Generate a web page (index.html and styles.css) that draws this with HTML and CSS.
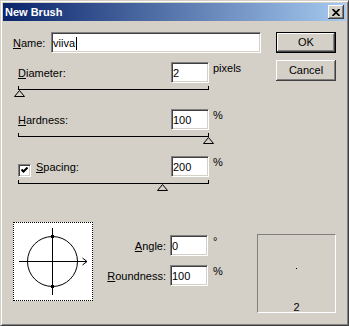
FILE: index.html
```html
<!DOCTYPE html>
<html lang="en">
  <head>
    <meta charset="UTF-8" />
    <meta name="viewport" content="width=device-width, initial-scale=1.0" />
    <title>New Brush</title>
    <link rel="stylesheet" href="styles.css">
  </head>
  <body>
    <div class="window">
      <div class="titlebar">
        <span class="title">New Brush</span>
        <span class="close">
          <svg width="8" height="7" viewBox="0 0 8 7">
            <path d="M0.5 0 L7.5 7 M7.5 0 L0.5 7" stroke="#000" stroke-width="1.7" fill="none" />
          </svg>
        </span>
      </div>

      <div class="dialog">
        <div class="top">
          <div class="fields">
            <div class="name-row">
              <span class="name-label"><u>N</u>ame:</span>
              <span class="field name-field">viiva<span class="caret"></span></span>
            </div>

            <div class="setting">
              <div class="setting-row">
                <span class="setting-label"><u>D</u>iameter:</span>
                <span class="field">2</span>
                <span class="unit">pixels</span>
              </div>
              <div class="slider">
                <span class="thumb" style="left: calc(0% - 5px)">
                  <svg width="11" height="7"><polygon points="5.5,0.5 0.5,6.5 10.5,6.5" fill="none" stroke="#000" /></svg>
                </span>
              </div>
            </div>

            <div class="setting">
              <div class="setting-row">
                <span class="setting-label"><u>H</u>ardness:</span>
                <span class="field">100</span>
                <span class="unit">%</span>
              </div>
              <div class="slider">
                <span class="thumb" style="left: calc(100% - 5px)">
                  <svg width="11" height="7"><polygon points="5.5,0.5 0.5,6.5 10.5,6.5" fill="none" stroke="#000" /></svg>
                </span>
              </div>
            </div>

            <div class="setting">
              <div class="setting-row">
                <span class="setting-label">
                  <span class="checkbox">
                    <svg width="7" height="7"><path d="M0.5 2.5 L2.5 4.5 L6.5 0.5" stroke="#000" stroke-width="2" fill="none" /></svg>
                  </span><u>S</u>pacing:
                </span>
                <span class="field">200</span>
                <span class="unit">%</span>
              </div>
              <div class="slider">
                <span class="thumb" style="left: calc(75.7% - 5px)">
                  <svg width="11" height="7"><polygon points="5.5,0.5 0.5,6.5 10.5,6.5" fill="none" stroke="#000" /></svg>
                </span>
              </div>
            </div>
          </div>

          <div class="buttons">
            <button class="btn btn-default">OK</button>
            <button class="btn">Cancel</button>
          </div>
        </div>

        <div class="bottom">
          <div class="preview">
            <svg width="78" height="77" viewBox="0 0 78 77">
              <circle cx="38.5" cy="38.5" r="25" fill="none" stroke="#000" />
              <path d="M5 38.5 H73 M38.5 5 V72" stroke="#000" fill="none" />
              <path d="M68.5 35 L73 38.5 L68.5 42" stroke="#000" fill="none" />
              <rect x="37" y="12" width="3" height="3" />
              <rect x="37" y="62" width="3" height="3" />
            </svg>
          </div>

          <div class="angles">
            <span class="angle-label"><u>A</u>ngle:</span>
            <span class="field">0</span>
            <span class="unit">°</span>
            <span class="angle-label"><u>R</u>oundness:</span>
            <span class="field">100</span>
            <span class="unit">%</span>
          </div>

          <div class="sample">
            <span class="sample-dot"></span>
            <span class="sample-size">2</span>
          </div>
        </div>
      </div>
    </div>
  </body>
</html>
```

FILE: styles.css
```css
* {
  box-sizing: border-box;
}
body {
  margin: 0;
  background: #d4d0c8;
  font-family: "Liberation Sans", Arial, sans-serif;
  font-size: 11px;
  color: #000;
}
.window {
  width: 349px;
  height: 326px;
  padding: 2px;
  background: #d4d0c8;
  border: 1px solid;
  border-color: #d4d0c8 #404040 #404040 #d4d0c8;
  box-shadow: inset 1px 1px #fff, inset -1px -1px #808080;
}
.titlebar {
  display: flex;
  align-items: center;
  height: 18px;
  padding: 0 2px;
  background: linear-gradient(to right, #0a246a, #a6caf0);
}
.title {
  flex: 1;
  color: #fff;
  font-weight: bold;
  line-height: 13px;
}
.close {
  display: flex;
  align-items: center;
  justify-content: center;
  width: 16px;
  height: 14px;
  background: #d4d0c8;
  box-shadow: inset -1px -1px #404040, inset 1px 1px #fff, inset -2px -2px #808080;
}
.dialog {
  padding: 11px 10px 0 10px;
}
.top {
  display: flex;
}
.fields {
  width: 248px;
  display: flex;
  flex-direction: column;
}
.name-row {
  display: flex;
  align-items: baseline;
}
.name-label {
  width: 38px;
}
.field {
  display: block;
  height: 21px;
  padding: 3px 1px 0;
  line-height: 14px;
  white-space: nowrap;
  background: #fff;
  border: 1px solid;
  border-color: #808080 #fff #fff #808080;
  box-shadow: inset 1px 1px #404040, inset -1px -1px #d4d0c8;
}
.name-field {
  width: 210px;
}
.caret {
  display: inline-block;
  width: 1px;
  height: 13px;
  margin-left: 1px;
  vertical-align: -3px;
  background: #000;
}
.setting {
  margin-top: 19px;
  margin-left: 5px;
}
.name-row + .setting {
  margin-top: 9px;
}
.setting-row {
  display: grid;
  grid-template-columns: 153px 38px auto;
  align-items: baseline;
}
.unit {
  align-self: start;
  margin-left: 4px;
  line-height: 13px;
}
.checkbox {
  display: inline-flex;
  align-items: center;
  justify-content: center;
  width: 13px;
  height: 13px;
  margin-right: 5px;
  vertical-align: -3px;
  background: #fff;
  border: 1px solid;
  border-color: #808080 #fff #fff #808080;
  box-shadow: inset 1px 1px #404040, inset -1px -1px #d4d0c8;
}
.slider {
  position: relative;
  width: 191px;
  height: 4px;
  margin-top: 3px;
  border: 1px solid #000;
  border-top: 0;
}
.thumb {
  position: absolute;
  top: 4px;
  display: block;
  width: 11px;
  height: 7px;
}
.thumb svg {
  display: block;
}
.buttons {
  display: flex;
  flex-direction: column;
  gap: 7px;
  margin-left: auto;
}
.btn {
  width: 60px;
  height: 21px;
  padding: 0;
  font: inherit;
  line-height: 13px;
  color: #000;
  background: #d4d0c8;
  border: 0;
  box-shadow: inset -1px -1px #404040, inset 1px 1px #fff, inset -2px -2px #808080;
}
.btn-default {
  border: 1px solid #000;
}
.bottom {
  display: flex;
  align-items: flex-start;
  margin-top: 38px;
}
.preview {
  width: 80px;
  height: 79px;
  background: #fff;
  border: 1px dotted #000;
}
.preview svg {
  display: block;
}
.angles {
  display: grid;
  grid-template-columns: 62px 38px auto;
  column-gap: 4px;
  row-gap: 9px;
  align-items: baseline;
  margin: 13px 0 0 11px;
}
.angle-label {
  text-align: right;
}
.angles .unit {
  margin-left: 1px;
}
.sample {
  display: flex;
  flex-direction: column;
  align-items: center;
  width: 79px;
  height: 79px;
  margin: 12px 0 0 auto;
  border: 1px solid;
  border-color: #808080 #fff #fff #808080;
}
.sample-dot {
  width: 1px;
  height: 1px;
  margin-top: 33px;
  background: #000;
}
.sample-size {
  margin-top: auto;
  line-height: 11px;
  margin-bottom: -1px;
}
```
